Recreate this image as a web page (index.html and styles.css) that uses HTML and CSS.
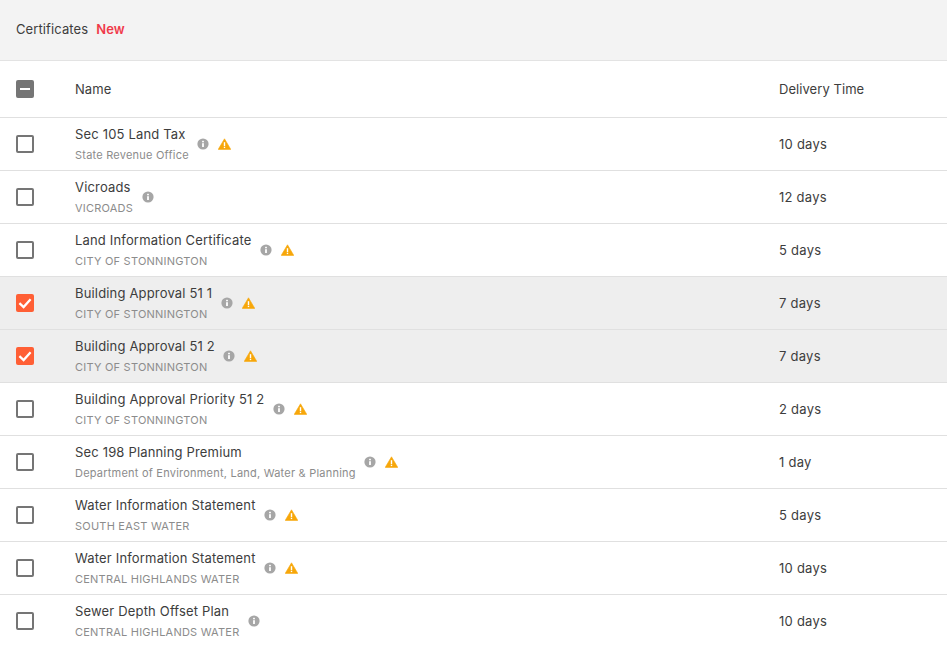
FILE: index.html
```html
<!DOCTYPE html>
<html lang="en">
<head>
<meta charset="utf-8">
<title>Certificates</title>
<link rel="stylesheet" href="styles.css">
</head>
<body>
<svg class="defs" width="0" height="0" aria-hidden="true">
  <symbol id="info" viewBox="0 0 12 12"><circle cx="6" cy="6" r="5.6" fill="#a6a6a6"/><rect x="5.1" y="5.2" width="1.8" height="3.8" fill="#fff"/><rect x="5.1" y="2.8" width="1.8" height="1.5" fill="#fff"/></symbol>
  <symbol id="warn" viewBox="0 0 13 12"><path d="M6.5.8 12.8 11.4H.2z" fill="#f7a70a" stroke="#f7a70a" stroke-width=".6" stroke-linejoin="round"/><rect x="5.8" y="4.2" width="1.4" height="3.8" fill="#fff"/><rect x="5.8" y="8.7" width="1.4" height="1.4" fill="#fff"/></symbol>
  <symbol id="tick" viewBox="0 0 18 18"><path d="M3.4 9.2 7.6 13 14.6 5.2" fill="none" stroke="#fff" stroke-width="2.3"/></symbol>
</svg>
<header class="top"><span>Certificates</span><strong class="new">New</strong></header>
<div class="row head">
  <span class="box mixed"><i></i></span>
  <div class="name">Name</div>
  <div class="time">Delivery Time</div>
</div>
<div class="row">
  <span class="box"></span>
  <div class="name"><div class="block"><div>Sec 105 Land Tax</div><small>State Revenue Office</small></div><svg class="info"><use href="#info"/></svg><svg class="warn"><use href="#warn"/></svg></div>
  <div class="time">10 days</div>
</div>
<div class="row">
  <span class="box"></span>
  <div class="name"><div class="block"><div>Vicroads</div><small>VICROADS</small></div><svg class="info"><use href="#info"/></svg></div>
  <div class="time">12 days</div>
</div>
<div class="row">
  <span class="box"></span>
  <div class="name"><div class="block"><div>Land Information Certificate</div><small>CITY OF STONNINGTON</small></div><svg class="info"><use href="#info"/></svg><svg class="warn"><use href="#warn"/></svg></div>
  <div class="time">5 days</div>
</div>
<div class="row selected">
  <span class="box checked"><svg><use href="#tick"/></svg></span>
  <div class="name"><div class="block"><div>Building Approval 51 1</div><small>CITY OF STONNINGTON</small></div><svg class="info"><use href="#info"/></svg><svg class="warn"><use href="#warn"/></svg></div>
  <div class="time">7 days</div>
</div>
<div class="row selected">
  <span class="box checked"><svg><use href="#tick"/></svg></span>
  <div class="name"><div class="block"><div>Building Approval 51 2</div><small>CITY OF STONNINGTON</small></div><svg class="info"><use href="#info"/></svg><svg class="warn"><use href="#warn"/></svg></div>
  <div class="time">7 days</div>
</div>
<div class="row">
  <span class="box"></span>
  <div class="name"><div class="block"><div>Building Approval Priority 51 2</div><small>CITY OF STONNINGTON</small></div><svg class="info"><use href="#info"/></svg><svg class="warn"><use href="#warn"/></svg></div>
  <div class="time">2 days</div>
</div>
<div class="row">
  <span class="box"></span>
  <div class="name"><div class="block"><div>Sec 198 Planning Premium</div><small>Department of Environment, Land, Water &amp; Planning</small></div><svg class="info"><use href="#info"/></svg><svg class="warn"><use href="#warn"/></svg></div>
  <div class="time">1 day</div>
</div>
<div class="row">
  <span class="box"></span>
  <div class="name"><div class="block"><div>Water Information Statement</div><small>SOUTH EAST WATER</small></div><svg class="info"><use href="#info"/></svg><svg class="warn"><use href="#warn"/></svg></div>
  <div class="time">5 days</div>
</div>
<div class="row">
  <span class="box"></span>
  <div class="name"><div class="block"><div>Water Information Statement</div><small>CENTRAL HIGHLANDS WATER</small></div><svg class="info"><use href="#info"/></svg><svg class="warn"><use href="#warn"/></svg></div>
  <div class="time">10 days</div>
</div>
<div class="row last">
  <span class="box"></span>
  <div class="name"><div class="block"><div>Sewer Depth Offset Plan</div><small>CENTRAL HIGHLANDS WATER</small></div><svg class="info"><use href="#info"/></svg></div>
  <div class="time">10 days</div>
</div>
</body>
</html>
```
FILE: styles.css
```css
html, body { margin: 0; padding: 0; background: #fff; overflow: hidden; }
body { font-family: Inter, "Liberation Sans", sans-serif; font-size: 13px; line-height: 16px; color: #3d3d3d; height: 646px; letter-spacing: .17px; }
.defs { position: absolute; }
.top { background: #f3f3f3; border-bottom: 1px solid #e3e3e3; display: flex; align-items: center; padding: 0 0 2px 16px; height: 58px; gap: 8px; letter-spacing: .1px; }
.new { color: #f03a4a; font-weight: 600; }
.row { display: flex; align-items: center; height: 52px; border-bottom: 1px solid #e0e0e0; }
.row.head { height: 56px; letter-spacing: .06px; }
.row.selected { background: #eeeeee; }
.row.last { border-bottom: 0; }
.box { flex: none; width: 18px; height: 18px; box-sizing: border-box; margin: 0 41px 0 16px; border: 2px solid #757575; border-radius: 2px; display: flex; align-items: center; justify-content: center; }
.box.mixed { background: #757575; }
.box.mixed i { display: block; width: 10px; height: 2px; background: #fff; }
.box.checked { background: #ff5f35; border: 0; }
.box.checked svg { width: 18px; height: 18px; }
.name { flex: 1; display: flex; align-items: center; }
.block { padding-bottom: 1px; }
.block small { display: block; font-size: 11px; line-height: 14px; margin-top: 6px; color: #8c8c8c; letter-spacing: .22px; }
.info { flex: none; width: 12px; height: 12px; margin-left: 8.5px; }
.warn { flex: none; width: 13px; height: 12px; margin-left: 9px; }
.time { flex: none; width: 168px; letter-spacing: .25px; }
.head .time { letter-spacing: .06px; }
```
